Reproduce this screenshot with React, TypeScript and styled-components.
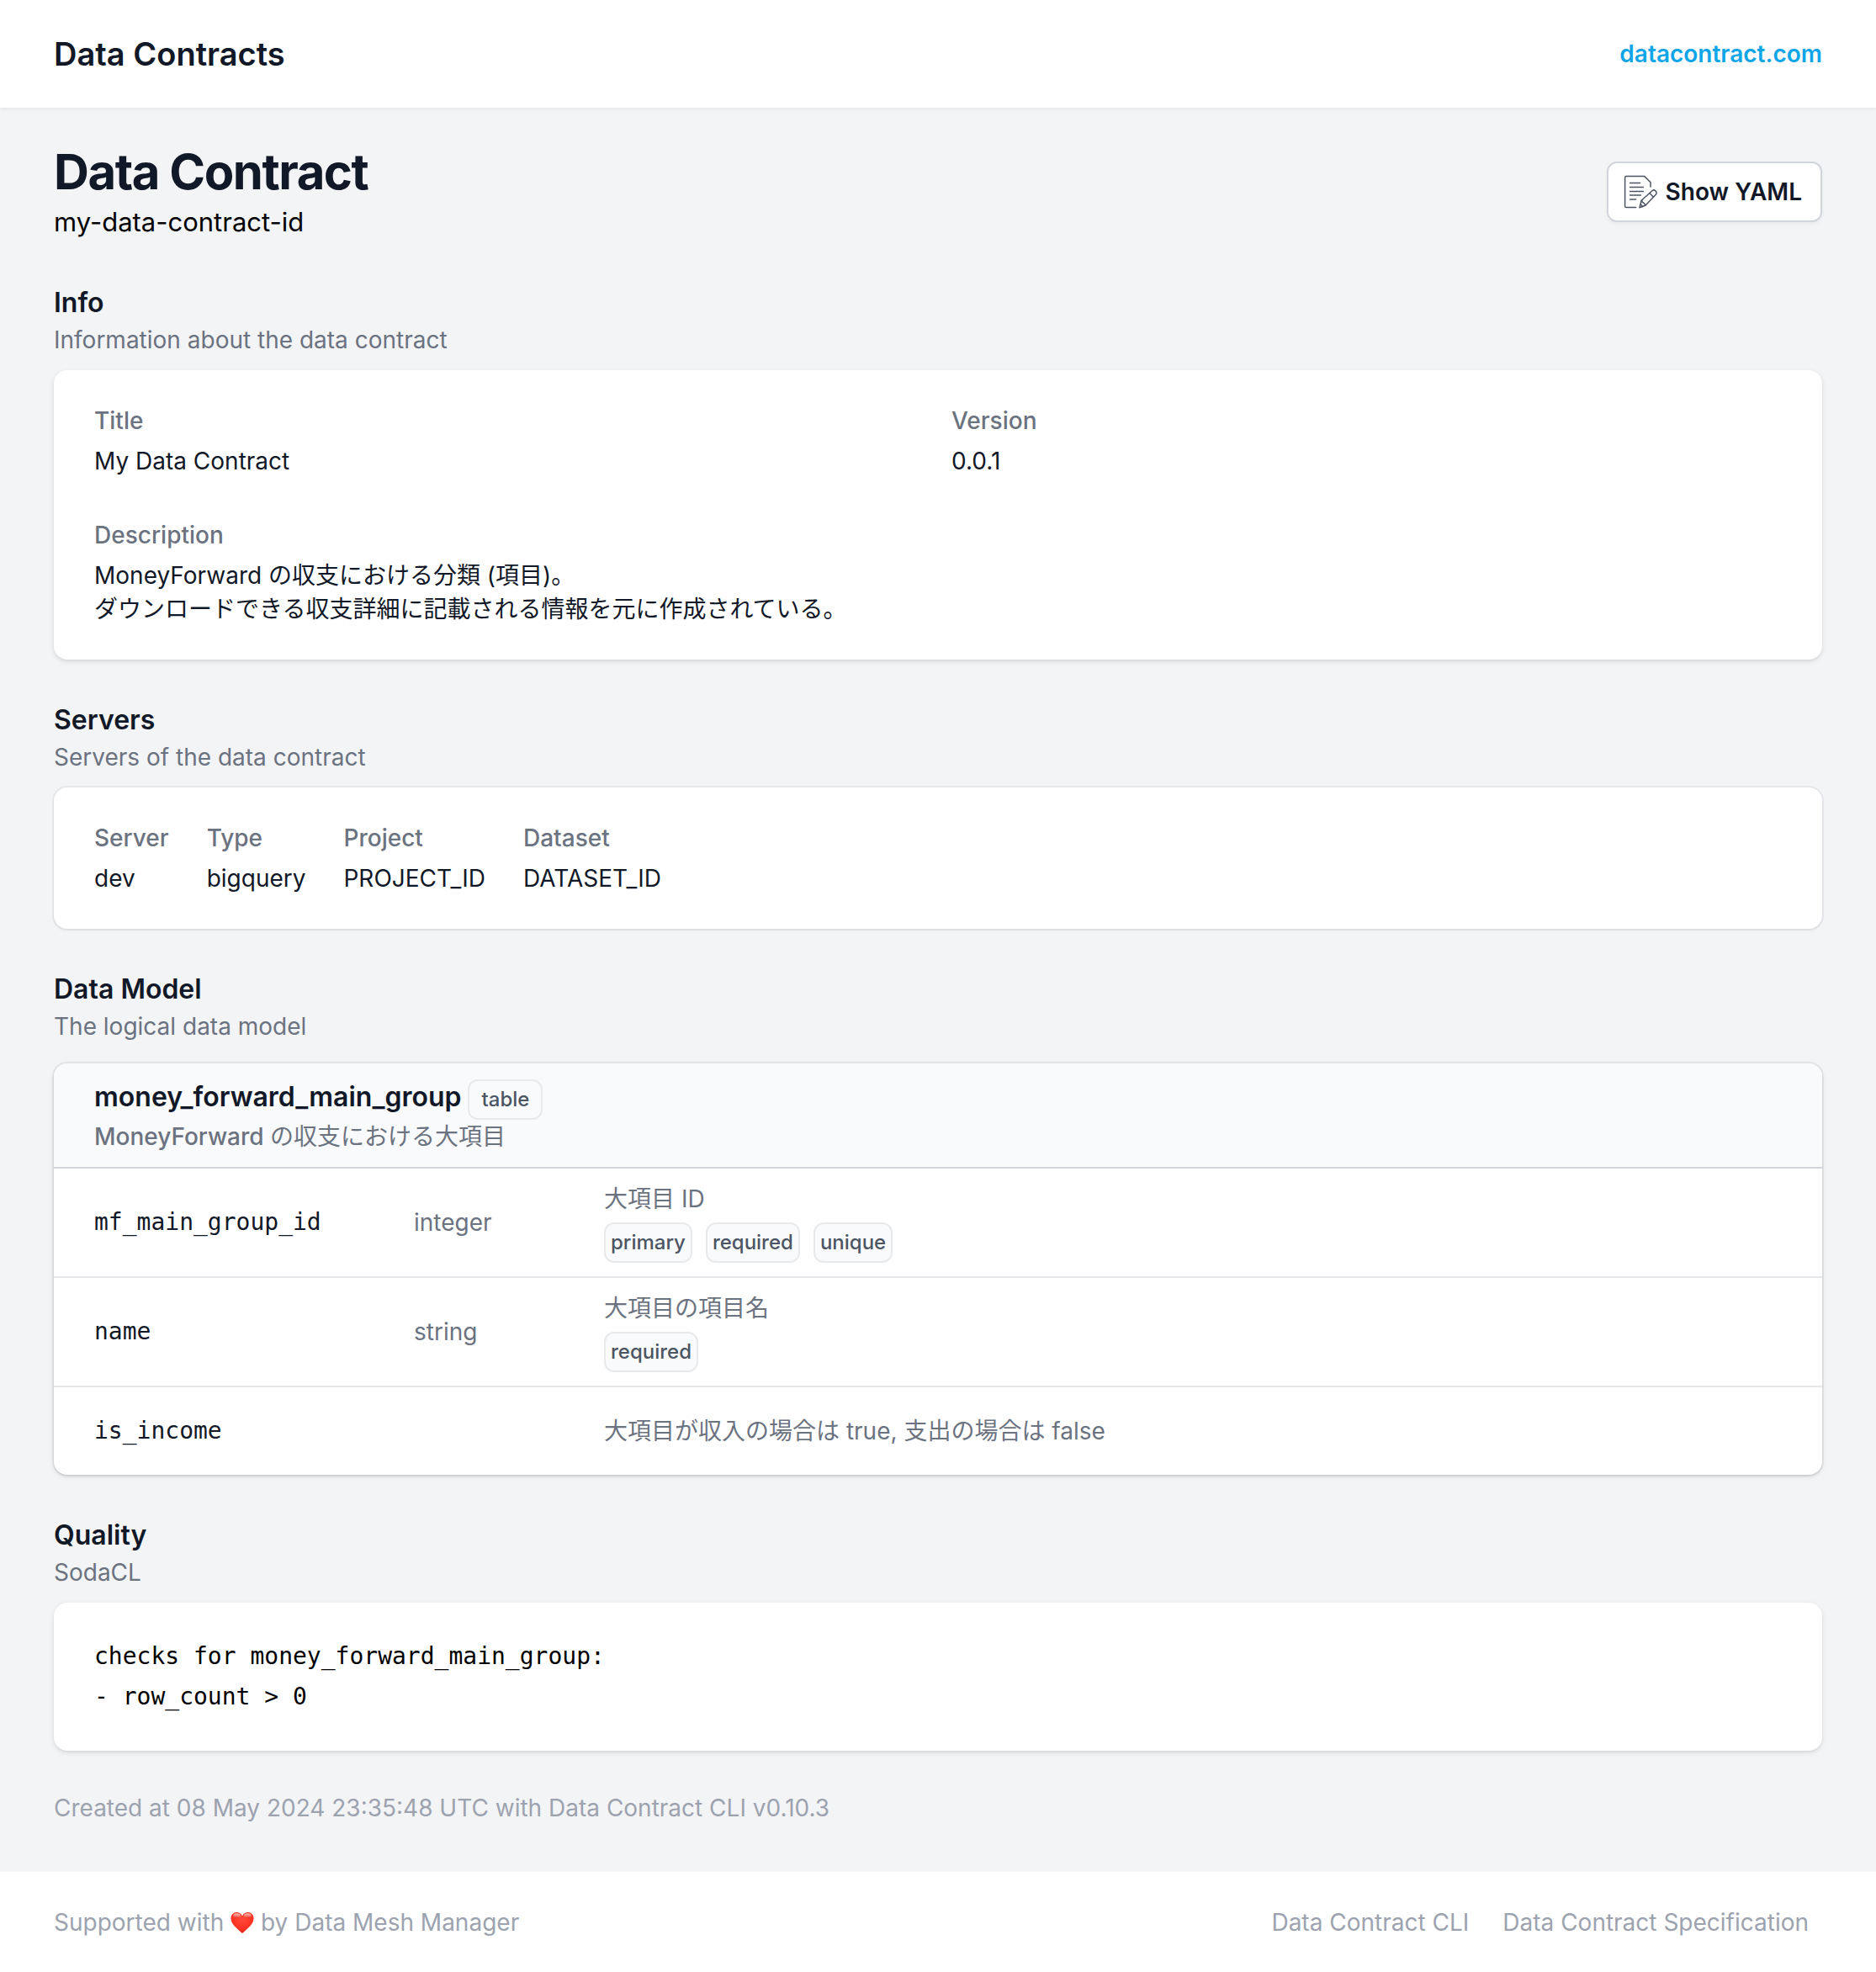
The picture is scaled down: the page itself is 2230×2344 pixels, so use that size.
import React from "react";
import styled, { createGlobalStyle } from "styled-components";

const sans = `Inter, "Noto Sans CJK JP", sans-serif`;
const mono = `"DejaVu Sans Mono", "Liberation Mono", monospace`;

const color = {
  ink: "#111827",
  body: "#4b5563",
  muted: "#6b7280",
  faint: "#9ca3af",
  line: "#d1d5db",
  lineSoft: "#e5e7eb",
  page: "#f3f4f6",
  panel: "#f9fafb",
  link: "#0ea5e9",
};

const GlobalStyle = createGlobalStyle`
  *, *::before, *::after { box-sizing: border-box; }
  html { background: #fff; }
  body {
    margin: 0;
    font-family: ${sans};
    font-size: 28px;
    line-height: 40px;
    color: ${color.ink};
    -webkit-font-smoothing: antialiased;
  }
  h1, h2, h3, p, dl, dd, dt, pre { margin: 0; }
  a { color: inherit; text-decoration: none; }
`;

const TopBar = styled.header`
  position: relative;
  display: flex;
  align-items: center;
  justify-content: space-between;
  min-height: 128px;
  padding: 0 64px;
  background: #fff;
  box-shadow: 0 2px 4px rgba(0, 0, 0, 0.05);
`;

const Brand = styled.a`
  font-size: 38px;
  line-height: 56px;
  font-weight: 600;
`;

const SiteLink = styled.a`
  && {
    color: ${color.link};
  }
  font-weight: 600;
`;

const Main = styled.main`
  display: flex;
  flex-direction: column;
  gap: 48px;
  padding: 40px 64px 56px;
  background: ${color.page};
`;

const PageHead = styled.div`
  display: flex;
  align-items: center;
  justify-content: space-between;
  gap: 48px;
`;

const PageTitle = styled.h1`
  font-size: 58px;
  line-height: 72px;
  font-weight: 700;
  letter-spacing: -0.025em;
`;

const ContractId = styled.p`
  font-size: 31px;
  line-height: 48px;
  color: #000;
`;

const YamlButton = styled.button`
  display: inline-flex;
  align-items: center;
  gap: 10px;
  height: 72px;
  padding: 0 22px 0 18px;
  border: 2px solid ${color.line};
  border-radius: 12px;
  background: #fff;
  box-shadow: 0 2px 4px rgba(0, 0, 0, 0.05);
  font: 600 28px/40px ${sans};
  color: ${color.ink};
  cursor: pointer;
`;

const SectionTitle = styled.h2`
  font-size: 32px;
  line-height: 48px;
  font-weight: 600;
`;

const SectionNote = styled.p`
  color: ${color.muted};
`;

const cardShadow = "0 2px 6px rgba(0, 0, 0, 0.1), 0 2px 4px -2px rgba(0, 0, 0, 0.1)";

const Card = styled.div<{ $ring?: boolean }>`
  margin-top: 16px;
  padding: 40px 48px;
  border-radius: 16px;
  background: #fff;
  box-shadow: ${(p) =>
    p.$ring ? "0 0 0 2px rgba(17, 24, 39, 0.05), 0 2px 4px rgba(0, 0, 0, 0.05)" : cardShadow};
`;

const InfoGrid = styled.dl`
  display: grid;
  grid-template-columns: 1fr 1fr;
  gap: 48px 32px;
`;

const ServerRow = styled.dl`
  display: flex;
  gap: 45px;
`;

const Field = styled.div<{ $wide?: boolean }>`
  display: flex;
  flex-direction: column;
  gap: 8px;
  grid-column: ${(p) => (p.$wide ? "1 / -1" : "auto")};
`;

const Label = styled.dt`
  font-weight: 500;
  color: ${color.muted};
`;

const Value = styled.dd`
  white-space: pre-line;
`;

const TableFrame = styled.div`
  margin-top: 24px;
  overflow: hidden;
  border-radius: 16px;
  background: #fff;
  box-shadow: 0 0 0 2px rgba(0, 0, 0, 0.05), ${cardShadow};
`;

const ModelTable = styled.table`
  width: 100%;
  table-layout: fixed;
  border-spacing: 0;
`;

const NameCol = styled.col`
  width: 404px;
`;

const TypeCol = styled.col`
  width: 226px;
`;

const ModelHead = styled.th`
  padding: 16px 48px;
  border-bottom: 2px solid ${color.line};
  background: ${color.panel};
  text-align: left;
  font-weight: 500;
  color: ${color.muted};
`;

const Japanese = styled.span`
  font-weight: 400;
`;

const ModelTitle = styled.div`
  display: flex;
  align-items: baseline;
  gap: 8px;
  font-size: 32px;
  line-height: 48px;
  font-weight: 600;
  color: ${color.ink};
`;

const Tag = styled.span<{ $roomy?: boolean }>`
  display: inline-flex;
  align-items: center;
  height: 48px;
  padding: 0 ${(p) => (p.$roomy ? 16 : 8)}px;
  border-radius: 12px;
  background: ${color.panel};
  box-shadow: inset 0 0 0 2px rgba(75, 85, 99, 0.1);
  font-size: 24px;
  line-height: 32px;
  font-weight: 500;
  color: ${color.body};
`;

const Tags = styled.div`
  display: flex;
  gap: 16px;
  margin-top: 8px;
`;

const FieldRow = styled.tr`
  & + & > td {
    border-top: 2px solid ${color.lineSoft};
  }
`;

const NameCell = styled.td`
  padding: 32px 24px 32px 48px;
  font-family: ${mono};
`;

const TypeCell = styled.td`
  padding: 16px 24px;
  color: ${color.muted};
`;

const NoteCell = styled.td`
  padding: 16px 24px;
  color: ${color.muted};
`;

const Code = styled.pre`
  font-family: ${mono};
  line-height: 48px;
  color: #000;
`;

const Created = styled.p`
  color: ${color.faint};
`;

const Footer = styled.footer`
  display: flex;
  align-items: center;
  justify-content: space-between;
  padding: 40px 80px 39px 64px;
  background: #fff;
  color: ${color.faint};
`;

const FooterLinks = styled.nav`
  display: flex;
  gap: 40px;
`;

const HeartIcon = styled.svg`
  width: 28px;
  height: 28px;
  vertical-align: -4px;
`;

function EditDocument() {
  return (
    <svg
      width="40"
      height="40"
      viewBox="0 0 40 40"
      fill="none"
      stroke="#4b5563"
      strokeWidth="1.5"
      strokeLinecap="round"
      strokeLinejoin="round"
      aria-hidden="true"
    >
      <path d="M14.6 38.5H3.2a1.6 1.6 0 0 1-1.6-1.6V3.2a1.6 1.6 0 0 1 1.6-1.6h21.6l7.2 7.1v5.4" />
      <path d="M7.6 9.4h11.8M7.6 14.4h15.8M7.6 19.4h15.8M7.6 24h12.8M7.6 28.9h7" />
      <path d="M21.2 30.2 33.4 19.2a3.1 3.1 0 0 1 4.9 4.1L25.8 36.2l-6.8 2.6z" />
      <path d="M21.2 30.2c.9.5 1.2 1.4 1 2.2 1.5.1 2.2.8 2.1 1.9.8.1 1.3.8 1.5 1.9M20.2 34.8l2.5 2.6M30.9 21.6l4.5 4.6" />
    </svg>
  );
}

function Heart() {
  return (
    <HeartIcon viewBox="0 0 28 28" role="img" aria-label="love">
      <defs>
        <radialGradient id="heart" cx="0.5" cy="0.35" r="0.75">
          <stop offset="0" stopColor="#ff4a3a" />
          <stop offset="0.65" stopColor="#fb3020" />
          <stop offset="1" stopColor="#c0100a" />
        </radialGradient>
        <linearGradient id="gloss" x1="0" y1="0" x2="0" y2="1">
          <stop offset="0" stopColor="#fff" stopOpacity="0.7" />
          <stop offset="1" stopColor="#fff" stopOpacity="0" />
        </linearGradient>
      </defs>
      <path
        fill="url(#heart)"
        d="M14 27C9.500 22.500 0.500 17 0.500 9.200 0.500 5 3.500 2 7.400 2c2.900 0 5.500 1.600 6.600 4.500C15.100 3.600 17.700 2 20.600 2 24.500 2 27.500 5 27.500 9.200 27.500 17 18.500 22.500 14 27z"
      />
      <ellipse cx="7.600" cy="6" rx="4.400" ry="2.800" fill="url(#gloss)" />
      <ellipse cx="20.400" cy="6" rx="4.400" ry="2.800" fill="url(#gloss)" />
    </HeartIcon>
  );
}

const servers = [
  ["Server", "dev"],
  ["Type", "bigquery"],
  ["Project", "PROJECT_ID"],
  ["Dataset", "DATASET_ID"],
];

const fields = [
  { name: "mf_main_group_id", type: "integer", note: "大項目 ID", tags: ["primary", "required", "unique"] },
  { name: "name", type: "string", note: "大項目の項目名", tags: ["required"] },
  { name: "is_income", type: "", note: "大項目が収入の場合は true, 支出の場合は false", tags: [] },
];

export default function App() {
  return (
    <>
      <GlobalStyle />
      <TopBar>
        <Brand href="#">Data Contracts</Brand>
        <SiteLink href="#">datacontract.com</SiteLink>
      </TopBar>
      <Main>
        <PageHead>
          <div>
            <PageTitle>Data Contract</PageTitle>
            <ContractId>my-data-contract-id</ContractId>
          </div>
          <YamlButton type="button">
            <EditDocument />
            Show YAML
          </YamlButton>
        </PageHead>

        <section>
          <SectionTitle>Info</SectionTitle>
          <SectionNote>Information about the data contract</SectionNote>
          <Card>
            <InfoGrid>
              <Field>
                <Label>Title</Label>
                <Value>My Data Contract</Value>
              </Field>
              <Field>
                <Label>Version</Label>
                <Value>0.0.1</Value>
              </Field>
              <Field $wide>
                <Label>Description</Label>
                <Value>
                  {"MoneyForward の収支における分類 (項目)。\nダウンロードできる収支詳細に記載される情報を元に作成されている。"}
                </Value>
              </Field>
            </InfoGrid>
          </Card>
        </section>

        <section>
          <SectionTitle>Servers</SectionTitle>
          <SectionNote>Servers of the data contract</SectionNote>
          <Card $ring>
            <ServerRow>
              {servers.map(([label, value]) => (
                <Field key={label}>
                  <Label>{label}</Label>
                  <Value>{value}</Value>
                </Field>
              ))}
            </ServerRow>
          </Card>
        </section>

        <section>
          <SectionTitle>Data Model</SectionTitle>
          <SectionNote>The logical data model</SectionNote>
          <TableFrame>
            <ModelTable>
              <colgroup>
                <NameCol />
                <TypeCol />
                <col />
              </colgroup>
              <thead>
                <tr>
                  <ModelHead colSpan={3} scope="colgroup">
                    <ModelTitle>
                      money_forward_main_group
                      <Tag $roomy>table</Tag>
                    </ModelTitle>
                    <div>
                      MoneyForward <Japanese lang="ja">の収支における大項目</Japanese>
                    </div>
                  </ModelHead>
                </tr>
              </thead>
              <tbody>
                {fields.map((f) => (
                  <FieldRow key={f.name}>
                    <NameCell>{f.name}</NameCell>
                    <TypeCell>{f.type}</TypeCell>
                    <NoteCell>
                      <div>{f.note}</div>
                      {f.tags.length > 0 && (
                        <Tags>
                          {f.tags.map((t) => (
                            <Tag key={t}>{t}</Tag>
                          ))}
                        </Tags>
                      )}
                    </NoteCell>
                  </FieldRow>
                ))}
              </tbody>
            </ModelTable>
          </TableFrame>
        </section>

        <section>
          <SectionTitle>Quality</SectionTitle>
          <SectionNote>SodaCL</SectionNote>
          <Card>
            <Code>{"checks for money_forward_main_group:\n- row_count > 0"}</Code>
          </Card>
        </section>

        <Created>Created at 08 May 2024 23:35:48 UTC with Data Contract CLI v0.10.3</Created>
      </Main>
      <Footer>
        <div>
          Supported with <Heart /> by <a href="#">Data Mesh Manager</a>
        </div>
        <FooterLinks>
          <a href="#">Data Contract CLI</a>
          <a href="#">Data Contract Specification</a>
        </FooterLinks>
      </Footer>
    </>
  );
}
